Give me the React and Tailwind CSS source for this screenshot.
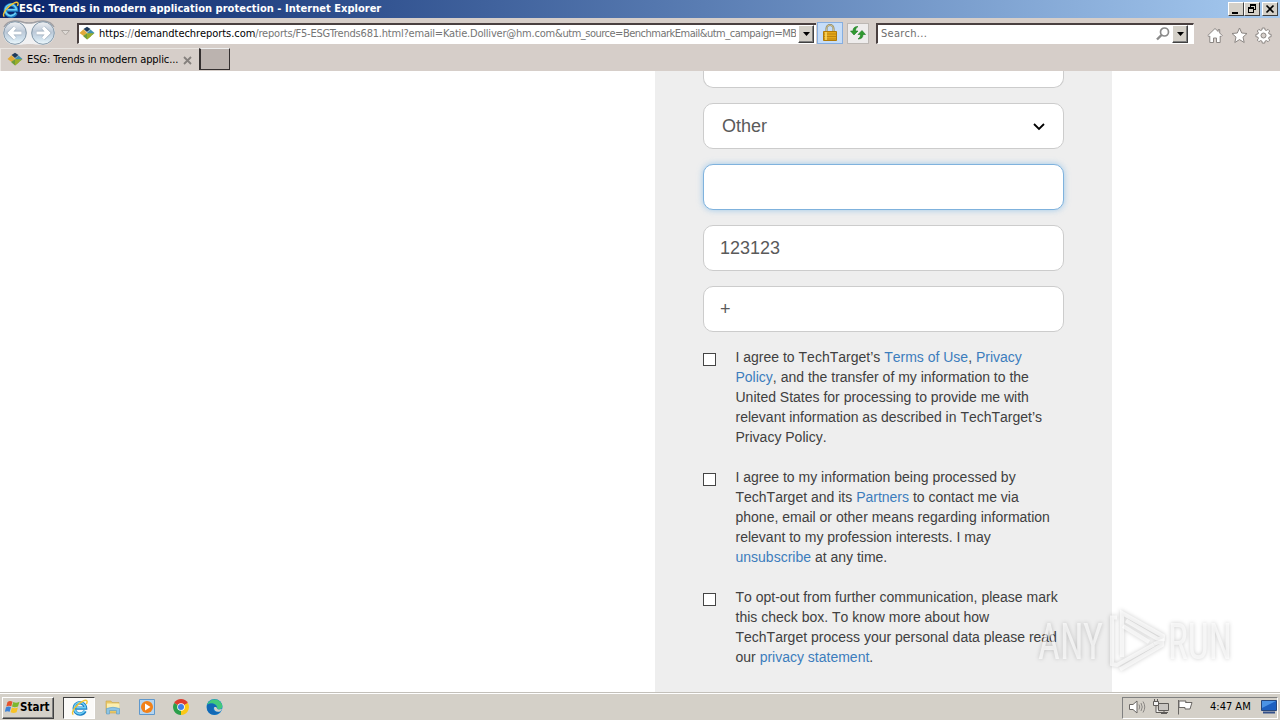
import clsx from 'clsx';

const chromeFont = "font-['DejaVu_Sans_Condensed','DejaVu_Sans',sans-serif] font-stretch-condensed";

const raised =
  'border border-t-white border-l-white border-r-[#404040] border-b-[#404040] bg-[#d4d0c8]';

const IeIcon = ({ size = 16 }) => (
  <svg width={size} height={size} viewBox="0 0 16 16" fill="none">
    <path
      d="M13.2 11.2A5.3 5.3 0 1 1 13.7 8.6H4.2"
      stroke="#1d7fc4"
      strokeWidth="3.2"
    />
    <path
      d="M13 11A5.3 5.3 0 1 1 13.6 8.3H5"
      stroke="#6fd0f6"
      strokeWidth="1.5"
    />
    <path
      d="M2.2 14.6C-.8 13.2 5.4 4.4 11.2 1.9c4.3-2 4.5.5 3.3 2.8"
      stroke="#f4c430"
      strokeWidth="1.3"
    />
  </svg>
);

const SiteIcon = () => (
  <svg width="16" height="16" viewBox="0 0 16 16">
    <path d="M4.5 3 8 .8 11.5 3 8 6z" fill="#1e3b5a" />
    <path d="M.5 7 4.5 3.3 8.3 7.2 4.5 10z" fill="#e0aa3a" />
    <path d="M8 6.8 11.5 3.6 15.5 7 11.8 10z" fill="#3f8fb0" />
    <path d="M4 10 8 7.2 12 10.3 8 13.5z" fill="#6d9c3a" />
    <path d="M8 7.2 15.3 7.3 8 13.5z" fill="#9aae28" />
  </svg>
);

const NavButtons = () => (
  <svg width="60" height="26" viewBox="0 0 60 26" className="shrink-0">
    <defs>
      <linearGradient id="orb" x1="0" y1="0" x2="0" y2="1">
        <stop offset="0" stopColor="#f0f1f3" />
        <stop offset="0.45" stopColor="#bcc9d8" />
        <stop offset="0.75" stopColor="#cfe0ec" />
        <stop offset="1" stopColor="#eef9fd" />
      </linearGradient>
    </defs>
    <path
      d="M15 1c7 0 8 2 14 2s7-2 14-2a12 12 0 0 1 0 24c-7 0-8-1-14-1s-7 1-14 1A12 12 0 0 1 15 1z"
      fill="#f1f1f2"
    />
    <path
      d="M4 7C8-1 20 .5 24 2.5q5 1 10 0C38 .5 50-1 54 7"
      fill="none"
      stroke="#a09fa3"
      strokeWidth="1.5"
    />
    {[15, 43].map((cx) => (
      <g key={cx}>
        <circle cx={cx} cy="13" r="11.3" fill="url(#orb)" stroke="#8297a8" />
        <path
          d="M6.5 0H-5M0-5.5-5.5 0 0 5.5"
          transform={`translate(${cx} 13) scale(${cx === 15 ? 1 : -1} 1)`}
          stroke="#9aabbb"
          strokeWidth="4.5"
          fill="none"
        />
        <path
          d="M6.5 0H-5M0-5.5-5.5 0 0 5.5"
          transform={`translate(${cx} 13) scale(${cx === 15 ? 1 : -1} 1)`}
          stroke="#fff"
          strokeWidth="3.2"
          fill="none"
        />
      </g>
    ))}
  </svg>
);

const DropButton = () => (
  <div
    className={clsx(
      raised,
      'flex h-[18px] w-4 shrink-0 items-center justify-center shadow-[inset_-1px_-1px_0_#808080]'
    )}
  >
    <svg width="7" height="4" viewBox="0 0 7 4">
      <path d="M0 0h7L3.5 4z" />
    </svg>
  </div>
);

const TitleBar = () => (
  <div className="flex h-[18px] shrink-0 items-center bg-linear-to-r from-[#0a246a] to-[#a6caf0] pr-0.5 pl-0.5">
    <IeIcon size={17} />
    <span className="w-[364px] text-[11px] font-bold tracking-[0.025px] whitespace-nowrap text-white">
      ESG: Trends in modern application protection - Internet Explorer
    </span>
    <div className="ml-auto flex">
      <div className={clsx(raised, 'flex h-3.5 w-4 justify-center')}>
        <svg width="12" height="12" viewBox="0 0 12 12">
          <path d="M2 9h6v2H2z" />
        </svg>
      </div>
      <div className={clsx(raised, 'flex h-3.5 w-4 justify-center')}>
        <svg width="12" height="12" viewBox="0 0 12 12" shapeRendering="crispEdges">
          <path d="M4 1h6v6H8V6h1V3H5v1H4zM2 4h6v6H2zm1 2v3h4V6z" fillRule="evenodd" />
        </svg>
      </div>
      <div className={clsx(raised, 'ml-0.5 flex h-3.5 w-4 justify-center')}>
        <svg width="12" height="12" viewBox="0 0 12 12">
          <path d="m2.5 2.5 7 7m0-7-7 7" stroke="#000" strokeWidth="1.7" />
        </svg>
      </div>
    </div>
  </div>
);

const AddressRow = () => (
  <div className="flex h-[30px] items-center">
    <NavButtons />
    <svg width="9" height="6" viewBox="0 0 9 6" className="ml-px shrink-0">
      <path d="M.5.5h8L4.5 5z" fill="#dedad6" stroke="#b0aaa6" />
    </svg>
    <div className="ml-[7px] flex h-[21px] w-[739px] shrink-0 items-center border-t-2 border-b border-l-2 border-t-[#4a4040] border-b-white border-l-[#4a4040] bg-white">
      <SiteIcon />
      <div className="ml-1 w-[697px] shrink-0 overflow-hidden pt-0.5 text-[11px] whitespace-nowrap text-[#757575]">
        <span className="tracking-[-0.04px]">
          <span className="text-black">https</span>://
          <span className="text-black">demandtechreports.com</span>
        </span>
        <span className="tracking-[-0.2px]">
          /reports/F5-ESGTrends681.html?email=Katie.Dolliver@hm.com&amp;
        </span>
        <span className="tracking-[-0.5px]">utm_source=BenchmarkEmail&amp;utm_campaign=MB</span>
      </div>
      <div className="ml-0.5">
        <DropButton />
      </div>
    </div>
    <div className="ml-px flex h-[22px] w-[26px] shrink-0 items-center justify-center border border-[#86aee0] bg-[#c6ddf8]">
      <svg width="14" height="17" viewBox="0 0 14 17" className="-mt-0.5">
        <path d="M3.5 8V4.5a3.5 3.5 0 0 1 7 0V8" fill="none" stroke="#8a8060" strokeWidth="2" />
        <path d="M3.5 8V4.5a3.5 3.5 0 0 1 7 0V8" fill="none" stroke="#e8dca0" strokeWidth="0.7" />
        <path d="M.5 7.5h13v9H.5z" fill="#e6a817" stroke="#b07a08" />
        <path d="M1 10h12M1 12.5h12M1 15h12" stroke="#bd8510" />
        <path d="M3 8v8" stroke="#fbdc6a" strokeWidth="1.5" />
      </svg>
    </div>
    <div className="ml-1 flex h-[21px] w-[22px] shrink-0 items-center justify-center border border-[#bdb8b4] bg-[#eeecec]">
      <svg width="16" height="14" viewBox="0 0 16 14" fill="#2f9a2f" stroke="#1b7a22" strokeWidth="0.6">
        <path d="M4 9 .5 5H3c0-3 1.5-4.5 5-4.5C6 2 5.5 3 5.5 5H8z" />
        <path d="m12 4.5 3.5 4H13c0 3-1.500 4.500-5 4.500 2-1.500 2.500-2.500 2.500-4.500H8z" />
      </svg>
    </div>
    <div className="ml-[7px] flex h-[21px] w-[318px] shrink-0 items-center border-t-2 border-r border-b border-l-2 border-t-[#4a4040] border-r-white border-b-white border-l-[#4a4040] bg-white pr-[5px]">
      <span className="ml-[3px] pt-0.5 text-[11px] tracking-[0.3px] text-[#6d6d6d]">Search...</span>
      <svg width="14" height="14" viewBox="0 0 14 14" fill="none" stroke="#8a8a8a" className="mr-0.5 ml-auto">
        <circle cx="8.5" cy="5" r="4" strokeWidth="1.7" />
        <path d="m5.5 8-4.5 4.5" strokeWidth="2.4" />
      </svg>
      <DropButton />
    </div>
    <div className="ml-[13px] flex items-center gap-2 pt-1">
      <svg width="16" height="17" viewBox="0 0 16 17" fill="#fff" stroke="#8b8683">
        <path d="M8 1.5.8 8.5 2 9.7l.8-.7v6.5h3.7V11h3v4.5h3.7V9l.8.7 1.2-1.2L12.700 6V2.500h-1.500v2z" />
      </svg>
      <svg width="17" height="17" viewBox="0 0 17 17" fill="#fff" stroke="#8b8683">
        <path d="m8.5 1 2.2 5 5.3.5-4 3.6 1.2 5.4-4.7-2.9-4.7 2.9L5 10.1 1 6.5 6.300 6z" />
      </svg>
      <svg width="17" height="17" viewBox="0 0 17 17" fill="#fff" stroke="#8b8683" className="-ml-px">
        <path d="M7.3 1h2.400l.4 2 1.300.5 1.700-1.100 1.600 1.600-1.100 1.700.5 1.300 2 .4v2.300l-2 .4-.5 1.300 1.100 1.700-1.600 1.600-1.700-1.100-1.300.5-.4 2H7.300l-.4-2-1.300-.5-1.700 1.100-1.600-1.600 1.100-1.700-.5-1.300-2-.4V7.400l2-.4.5-1.300L2.300 4l1.600-1.600 1.700 1.100L6.900 3z" />
        <circle cx="8.5" cy="8.5" r="2.5" fill="#d6cfca" />
      </svg>
    </div>
  </div>
);

const TabRow = () => (
  <div className="flex h-[23px] items-stretch">
    <div className="flex w-[199px] items-center border-t border-l border-[#e9e5e1] pl-1.5 text-[11px] whitespace-nowrap">
      <SiteIcon />
      <span className="mt-px ml-1 w-[152px] tracking-[-0.1px]">ESG: Trends in modern applic...</span>
      <svg width="9" height="9" viewBox="0 0 9 9" className="ml-1">
        <path d="m1 1 7 7M8 1 1 8" stroke="#85807d" strokeWidth="1.8" />
      </svg>
    </div>
    <div className="h-[22px] w-[31px] border-t border-r border-b border-l-2 border-t-[#eee] border-r-[#332f2f] border-b-[#332f2f] border-l-[#332f2f] bg-[#bbb3af]" />
  </div>
);

const Field = ({ children, focused }) => (
  <div
    className={clsx(
      'flex h-[46px] items-center rounded-[10px] border bg-white text-[18px] text-[#5a5a5a]',
      focused
        ? 'border-[#7fb2dd] shadow-[0_0_6px_rgba(102,175,233,0.6)]'
        : 'border-[#ccc]'
    )}
  >
    {children}
  </div>
);

const Link = ({ children }) => <a className="text-[#3c7dbd]">{children}</a>;

const Consent = ({ children }) => (
  <div className="flex">
    <div className="mt-1.5 h-[13px] w-[13px] shrink-0 border border-[#444] bg-white" />
    <p className="ml-[19.5px] text-[14px] leading-5 whitespace-nowrap text-[#404040] [font-kerning:none]">
      {children}
    </p>
  </div>
);

const SignupForm = () => (
  <div className="ml-[655px] flex h-full w-[457px] flex-col bg-[#eee] px-12 font-['Liberation_Sans',Arial,sans-serif]">
    <div className="mb-[15px] h-[17px] shrink-0 rounded-b-[10px] border border-t-0 border-[#ccc] bg-white" />
    <div className="flex flex-col gap-[15px]">
      <Field>
        <span className="ml-[18px]">Other</span>
        <svg width="12" height="8" viewBox="0 0 12 8" className="mt-px mr-[18px] ml-auto">
          <path d="m1 1 5 5 5-5" fill="none" stroke="#000" strokeWidth="1.8" />
        </svg>
      </Field>
      <Field focused />
      <Field>
        <span className="ml-4">123123</span>
      </Field>
      <Field>
        <span className="ml-4">+</span>
      </Field>
    </div>
    <div className="mt-[15px] flex flex-col gap-5">
      <Consent>
        I agree to TechTarget’s <Link>Terms of Use</Link>, <Link>Privacy</Link>
        <br />
        <Link>Policy</Link>, and the transfer of my information to the
        <br />
        United States for processing to provide me with
        <br />
        relevant information as described in TechTarget’s
        <br />
        Privacy Policy.
      </Consent>
      <Consent>
        I agree to my information being processed by
        <br />
        TechTarget and its <Link>Partners</Link> to contact me via
        <br />
        phone, email or other means regarding information
        <br />
        relevant to my profession interests. I may
        <br />
        <Link>unsubscribe</Link> at any time.
      </Consent>
      <Consent>
        To opt-out from further communication, please mark
        <br />
        this check box. To know more about how
        <br />
        TechTarget process your personal data please read
        <br />
        our <Link>privacy statement</Link>.
      </Consent>
    </div>
  </div>
);

const Watermark = () => (
  <svg
    width="208"
    height="68"
    viewBox="0 0 208 68"
    className="absolute top-[537px] left-[1036px] drop-shadow-[0_0_2px_rgba(0,0,0,0.3)]"
    fontFamily="Roboto, sans-serif"
    fontSize="50"
    fill="#fff"
    fillOpacity="0.65"
  >
    <text x="2" y="51" textLength="65" lengthAdjust="spacingAndGlyphs">ANY</text>
    <text x="132" y="51" textLength="64" lengthAdjust="spacingAndGlyphs">RUN</text>
    <g fill="none" stroke="#fff" strokeOpacity="0.65" strokeWidth="4">
      <path d="M81 9.500H76V56l5 1 37-20.500" />
      <path d="M86 49V5l41 23v3l-6-.5-31-18" />
      <path d="m87 18 26 16" />
      <path d="M84 61.500 126 37v-4l-8 3" />
    </g>
  </svg>
);

const Taskbar = () => (
  <div className="flex h-7 shrink-0 items-center border-t border-[#c3c0ba] bg-[#d4d0c8] pr-0.5 pl-0.5 shadow-[inset_0_1px_0_#fff]">
    <div className={clsx(raised, 'mt-0.5 flex h-[22px] w-[52px] items-center pl-0.5 shadow-[inset_-1px_-1px_0_#808080]')}>
      <svg width="15" height="16" viewBox="0 0 15 16" className="-mt-0.5 shrink-0">
        <path d="M2.5 3c2-1.500 3.500-1 5-.3L6.300 7.300c-1.600-.8-3-1-5 .2z" fill="#e5532d" />
        <path d="M8.3 3c2 1 3.800 1 6.200-.3L13 7.500c-2.200 1-4 1-6 .1z" fill="#7cb82f" />
        <path d="M1 8.3c2-1.200 3.500-1 5-.2l-1.300 4.700c-1.500-.8-3-1-5 .2z" fill="#3d83d8" />
        <path d="M6.9 8.500c2 1 3.800 1 6 .1l-1.300 4.700c-2.200 1-4 1-6 0z" fill="#f8c327" />
      </svg>
      <span className="text-[11.5px] font-bold">Start</span>
    </div>
    <div className="mt-0.5 ml-[9px] flex h-[22px] w-8 items-center justify-center border border-t-[#404040] border-r-white border-b-white border-l-[#404040] bg-[#fbfaf8]">
      <IeIcon size={17} />
    </div>
    <svg width="16" height="16" viewBox="0 0 16 16" className="ml-2.5">
      <path d="M1 2h5l1 1.500h7V14H1z" fill="#e8c766" stroke="#c9a64a" strokeWidth="0.6" />
      <path d="M2 4.500h12.500V10H2z" fill="#fbeeb0" />
      <path d="M1.500 15V9.500q6.500-2.500 13 0V15h-3v-3.500h-7V15z" fill="#8cc4e6" stroke="#5a9cc8" strokeWidth="0.6" />
    </svg>
    <svg width="16" height="16" viewBox="0 0 16 16" className="ml-[18px]">
      <path d="M.5.5h15v15H.5z" fill="#b5d5f0" stroke="#5f98cc" />
      <circle cx="8" cy="8" r="6" fill="#f28118" />
      <path d="M6 4.500 11.500 8 6 11.500z" fill="#fff" />
    </svg>
    <svg width="16" height="16" viewBox="0 0 16 16" className="ml-[18px]">
      <path d="M8 8 1.100 4A8 8 0 0 1 14.900 4z" fill="#de3c2e" />
      <path d="M8 8 14.900 4A8 8 0 0 1 8 16z" fill="#fbc816" />
      <path d="M8 8v8A8 8 0 0 1 1.100 4z" fill="#2c9f4b" />
      <circle cx="8" cy="8" r="3.8" fill="#fff" />
      <circle cx="8" cy="8" r="3" fill="#3f7fe8" />
    </svg>
    <svg width="17" height="16" viewBox="0 0 17 16" className="ml-[17px]">
      <circle cx="8.5" cy="8" r="8" fill="#1586d2" />
      <path d="M1 6C3-1 14-2 16.300 6.500c.7 3.500-3 4.500-5 3.500C12 5 5 3 1 6z" fill="#42c87c" />
      <path d="M1 6c4-3 10-1 10 3-2-2-4-1-3.500 1.500.5 2 3.500 3.500 7 1.800-3 5-12 4.700-13.500-2.300z" fill="#1268b5" />
      <path d="M8 9c0-1.500 3-1.300 3 .5 1 1.500 3.500 1 5 .2-.5 1.500-1 2-2 2.700-3.500 1-6-.8-6-3.400z" fill="#d4d0c8" />
    </svg>
    <div className="mt-0.5 ml-auto flex h-[22px] w-[156px] items-center border border-t-[#808080] border-r-white border-b-white border-l-[#808080] pb-px pl-1.5 text-[11px]">
      <svg width="17" height="16" viewBox="0 0 17 16" fill="#fff" stroke="#6a6764">
        <path d="M.5 5.500H4L8 2v12l-4-3.500H.5z" />
        <path d="M10 5.500q1.500 2.500 0 5M12 4q2.500 4 0 8M14 2.500q3.500 5.500 0 11" fill="none" stroke="#8a8784" />
      </svg>
      <svg width="16" height="16" viewBox="0 0 16 16" fill="#f3f3f3" stroke="#5e5b58" className="ml-[7px]">
        <path d="M5.500 4.500h10v7h-10z" fill="#c9c6c2" />
        <path d="M8 14.500h6M11 12v2M5 13.500h10" />
        <path d="M.5 2.500h5v4h-5zM1.500 0v2M4.500 0v2M3 7v6.500h3" />
      </svg>
      <svg width="16" height="16" viewBox="0 0 16 16" fill="#fff" stroke="#6a6764" className="ml-2">
        <path d="M1.500 1v14.500M2 2h7l-.5 1.500H15L13 10H8V8.500H2z" />
      </svg>
      <span className="mt-px ml-[17px] w-[42px] whitespace-nowrap">4:47 AM</span>
      <svg width="16" height="14" viewBox="0 0 16 14" className="ml-[9px]">
        <path d="M.5.5h15v10H.5z" fill="#1d5fc0" stroke="#27477c" />
        <path d="M1 1h14L1 8z" fill="#4b93e6" />
        <path d="M2 12.500h12" stroke="#33508a" strokeWidth="2" />
      </svg>
    </div>
  </div>
);

export default function App() {
  return (
    <div className={clsx(chromeFont, 'flex h-[720px] w-[1280px] flex-col overflow-hidden bg-white text-black')}>
      <TitleBar />
      <header className="h-[53px] shrink-0 bg-[#d6cec9]">
        <AddressRow />
        <TabRow />
      </header>
      <main className="relative min-h-0 flex-1 overflow-hidden">
        <SignupForm />
        <Watermark />
      </main>
      <Taskbar />
    </div>
  );
}
